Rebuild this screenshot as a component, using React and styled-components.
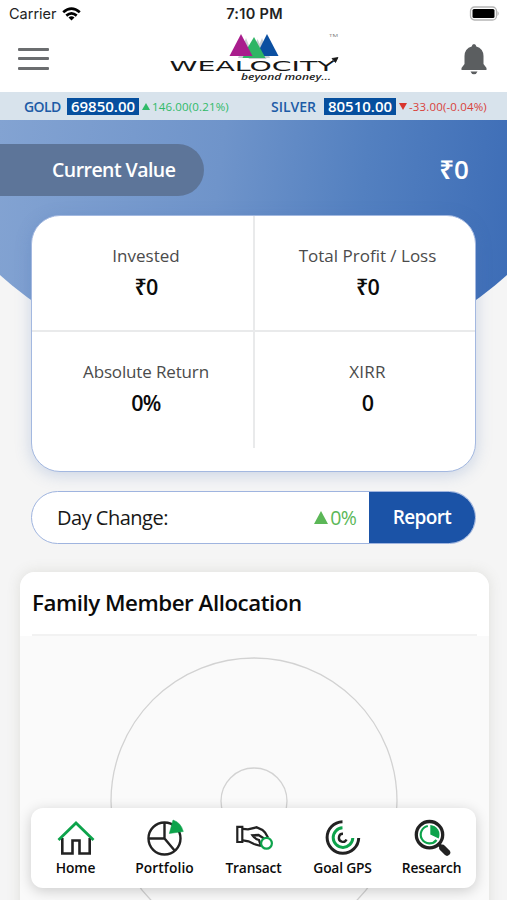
import React from 'react';
import styled, { createGlobalStyle } from 'styled-components';

const GlobalStyle = createGlobalStyle`
  * { box-sizing: border-box; }
  body {
    margin: 0;
    background: #f5f5f5;
    font-family: 'Open Sans', 'Noto Sans', sans-serif;
    color: #0b0b0b;
    overflow: hidden;
  }
`;

const Screen = styled.div`
  display: flex;
  flex-direction: column;
  width: 507px;
  height: 900px;
  overflow: hidden;
`;

const StatusBar = styled.div`
  display: grid;
  grid-template-columns: 1fr auto 1fr;
  align-items: center;
  flex: none;
  height: 27px;
  padding: 0 7px 0 9px;
  background: #fff;
  font-family: Inter, sans-serif;
  font-size: 14.5px;
  color: #222;
`;

const Carrier = styled.div`
  display: flex;
  align-items: center;
  gap: 5px;
`;

const Clock = styled.div`
  font-weight: 600;
  letter-spacing: 0.3px;
`;

const BatteryIcon = styled.svg`
  justify-self: end;
`;

const Header = styled.header`
  display: flex;
  justify-content: space-between;
  flex: none;
  height: 65px;
  padding: 1px 20px 0 18px;
  background: #fff;
`;

const MenuButton = styled.button`
  display: flex;
  flex-direction: column;
  gap: 6.4px;
  width: 31px;
  padding: 20px 0 0;
  border: 0;
  background: none;
`;

const MenuLine = styled.span`
  height: 3px;
  border-radius: 1px;
  background: #6b6d6f;
`;

const LogoSvg = styled.svg`
  margin: 3px 3px 0 0;
`;

const BellIcon = styled.svg`
  margin-top: 15px;
`;

const Ticker = styled.div`
  display: flex;
  align-items: center;
  flex: none;
  height: 28px;
  padding: 0 17px 0 24px;
  justify-content: space-between;
  background: #d8e3ec;
`;

const Quote = styled.div`
  display: flex;
  align-items: center;
`;

const Metal = styled.span`
  width: ${props => props.$width}px;
  font-size: 14px;
  font-weight: 600;
  color: #1c5ba6;
  letter-spacing: ${props => props.$spacing}px;
`;

const Price = styled.span`
  width: 72px;
  height: 17px;
  margin-right: 3px;
  background: #064f9e;
  color: #fff;
  font-size: 15px;
  font-weight: 600;
  line-height: 17px;
  text-align: center;
`;

const Move = styled.span`
  display: flex;
  align-items: center;
  gap: 2px;
  width: ${props => props.$width}px;
  font-size: 11.5px;
  font-weight: 500;
  white-space: nowrap;
  color: ${props => (props.$down ? '#d8413b' : '#2fba68')};
  letter-spacing: 0.15px;
`;

const Triangle = styled.span`
  flex: none;
  width: 0;
  height: 0;
  border-left: ${props => props.$size / 2}px solid transparent;
  border-right: ${props => props.$size / 2}px solid transparent;
  ${props => (props.$down ? 'border-top' : 'border-bottom')}: ${props => props.$size * 0.87}px solid ${props => props.color};
`;

const Hero = styled.section`
  position: relative;
  flex: none;
  padding: 24px 31px 0;

  &::before {
    content: '';
    position: absolute;
    z-index: -1;
    top: 0;
    left: 0;
    width: 100%;
    height: 252px;
    background: linear-gradient(97deg, #83a3d2 0%, #6f94ca 42%, #5380c0 69%, #3c6cb6 100%);
    clip-path: circle(380px at 50% -128px);
  }
`;

const CurrentValue = styled.div`
  display: flex;
  align-items: center;
  justify-content: space-between;
  height: 52px;
  margin: 0 7px 19px -31px;
  color: #fff;
`;

const CurrentLabel = styled.div`
  width: 204px;
  height: 52px;
  padding-left: 52px;
  border-radius: 0 26px 26px 0;
  background: #5d7599;
  font-size: 19.5px;
  font-weight: 600;
  line-height: 51px;
  letter-spacing: -0.55px;
`;

const CurrentAmount = styled.div`
  padding-bottom: 2px;
  font-size: 26px;
  font-weight: 600;
`;

const Summary = styled.div`
  display: grid;
  grid-template-columns: 223px 1fr;
  grid-template-rows: 116px 116px;
  height: 257px;
  border: 1px solid #a3b8e0;
  border-radius: 29px;
  background: #fff;
  box-shadow: 0 3px 16px rgba(70, 110, 180, 0.25);
`;

const Cell = styled.div`
  display: flex;
  flex-direction: column;
  align-items: center;
  padding: 28px 0 0 ${props => (props.$right ? 7 : 5)}px;
  border-right: ${props => (props.$right ? '2px solid #e9eaeb' : '0')};
  border-bottom: ${props => (props.$bottom ? '2px solid #e9eaeb' : '0')};
`;

const CellLabel = styled.div`
  font-size: 17px;
  line-height: 24px;
  color: #4b4b4b;
  letter-spacing: ${props => props.$spacing || 0}px;
`;

const CellValue = styled.div`
  margin-top: 4px;
  font-size: 21.5px;
  line-height: 30px;
  font-weight: 600;
  letter-spacing: -0.8px;
`;

const DayChange = styled.div`
  display: flex;
  align-items: center;
  height: 53px;
  margin-top: 19px;
  border: 1px solid #9fb4df;
  border-radius: 27px;
  background: #fff;
  overflow: hidden;
`;

const DayLabel = styled.div`
  flex: 1;
  padding: 0 0 1px 25px;
  font-size: 20px;
  color: #171717;
  letter-spacing: -0.5px;
`;

const DayValue = styled.div`
  display: flex;
  align-items: center;
  gap: 2px;
  padding: 0 13px 1px 0;
  font-size: 19.5px;
  font-weight: 500;
  color: #5bb757;
  letter-spacing: -0.8px;
`;

const ReportButton = styled.button`
  align-self: stretch;
  width: 106px;
  padding: 0 0 2px;
  border: 0;
  background: #1b53a7;
  color: #fff;
  font: 600 19px 'Open Sans', sans-serif;
  letter-spacing: -0.65px;
`;

const Allocation = styled.section`
  flex: none;
  width: 469px;
  height: 420px;
  margin: 28px 0 0 20px;
  border-radius: 15px;
  background: #fafafa;
  box-shadow: 0 0 14px rgba(110, 110, 90, 0.16);
  overflow: hidden;
`;

const AllocationTitle = styled.h2`
  height: 64px;
  margin: 0;
  padding: 0 12px;
  background: #fff;
  font-size: 22.3px;
  font-weight: 600;
  line-height: 62px;
  letter-spacing: -0.46px;

  &::after {
    content: '';
    display: block;
    height: 2px;
    background: #f2f2f2;
  }
`;

const AllocationChart = styled.svg`
  display: block;
`;

const TabBar = styled.nav`
  position: absolute;
  top: 808px;
  left: 31px;
  display: grid;
  grid-template-columns: repeat(5, 89px);
  width: 445px;
  height: 80px;
  border-radius: 12px;
  background: #fff;
  box-shadow: 0 3px 14px rgba(0, 0, 0, 0.19);
`;

const Tab = styled.div`
  display: flex;
  flex-direction: column;
  align-items: center;
  padding-top: 10px;
  font-size: 13.8px;
  font-weight: 600;
  line-height: 18px;
  letter-spacing: ${props => props.$spacing || 0}px;
`;

const TabIcon = styled.svg`
  flex: none;
  width: 40px;
  height: 40px;
  margin-bottom: 1px;
  fill: none;
`;

const GREEN = '#0da34b';
const INK = '#222';

const Logo = () => (
  <LogoSvg width="172" height="58" viewBox="168 31 172 58">
    <path d="M246 38l8 20h-16zM257.500 39l9 20h-18zM262 38l8 20h-16z" fill="#c9ced3" />
    <path d="M267 34L278.500 56H256z" fill="#0b4fa1" />
    <path d="M254 37L265.500 58H242.500l5-10z" fill="#2fb565" />
    <path d="M241 34L252.500 56H229.500z" fill="#a91d8d" />
    <text x="169.500" y="70.500" fontFamily="'DejaVu Sans', sans-serif" fontSize="14.500" fill="#161616" textLength="165" lengthAdjust="spacingAndGlyphs">WEALOCITY</text>
    <path d="M331 62l4-3.500M332 58.500l6-1-2.500 5z" fill="#161616" stroke="#161616" strokeWidth="0.800" />
    <text x="241" y="79.800" fontFamily="'Open Sans', sans-serif" fontSize="8.800" fontStyle="italic" fontWeight="600" fill="#222" textLength="90" lengthAdjust="spacingAndGlyphs">beyond money...</text>
    <text x="329" y="37" fontFamily="'Open Sans', sans-serif" fontSize="4" fill="#777" textLength="9" lengthAdjust="spacingAndGlyphs">TM</text>
  </LogoSvg>
);

const HomeIcon = () => (
  <TabIcon viewBox="0 0 40 40">
    <path d="M6.300 20V35.500H16.500V22.500H23.500V35.500H33.700V20" stroke={INK} strokeWidth="2.600" />
    <path d="M2.500 22L20 5L37.500 22" stroke={GREEN} strokeWidth="2.800" />
  </TabIcon>
);

const PortfolioIcon = () => (
  <TabIcon viewBox="0 0 40 40">
    <circle cx="19.500" cy="20.500" r="16" stroke={INK} strokeWidth="2.400" />
    <path d="M19.500 4.500V20.500M3.500 20.500H19.500L30 33" stroke={INK} strokeWidth="2.400" />
    <path d="M24.300 15.500L28 2Q36 4.500 38.300 13.500Z" fill={GREEN} stroke={GREEN} strokeWidth="0.500" />
  </TabIcon>
);

const TransactIcon = () => (
  <TabIcon viewBox="0 0 40 40">
    <path d="M3.300 8.800H8.300V24H3.300Z" stroke={INK} strokeWidth="2.200" />
    <path d="M8.800 10.800L14 11.300L22.800 9.300Q28 11 31 14.500L34 19.500M8.800 22.300L14.500 23.300L20 26L27 28" stroke={INK} strokeWidth="2.300" />
    <path d="M30 20.500L24.500 17L18.500 17.300Q21 21 25 22L26.500 27" stroke={INK} strokeWidth="2.300" />
    <circle cx="32.500" cy="25.300" r="5.400" fill="#fff" stroke={GREEN} strokeWidth="2.200" />
  </TabIcon>
);

const GoalIcon = () => (
  <TabIcon viewBox="0 0 40 40">
    <path d="M19.500 3.700A15.800 15.800 0 1 0 35.700 20" stroke={INK} strokeWidth="3" />
    <path d="M19.500 9.800A9.800 9.800 0 1 0 29.800 20" stroke={GREEN} strokeWidth="3" />
    <path d="M20 15.800A4 4 0 1 0 23.500 21.500" stroke={INK} strokeWidth="2.400" />
  </TabIcon>
);

const ResearchIcon = () => (
  <TabIcon viewBox="0 0 40 40">
    <circle cx="17.500" cy="16.700" r="13.200" stroke={INK} strokeWidth="3.300" />
    <path d="M26.500 26L29.500 29" stroke={INK} strokeWidth="3.500" />
    <path d="M30.500 30L35 34.500" stroke={INK} strokeWidth="6.500" strokeLinecap="round" />
    <path d="M15.800 8A8.800 8.800 0 1 0 24.500 22" stroke={GREEN} strokeWidth="2.200" />
    <path d="M18.300 16.500V7A9.700 9.700 0 0 1 26.700 20.500Z" fill={GREEN} />
  </TabIcon>
);

const stats = [
  { label: 'Invested', value: '₹0', spacing: 0 },
  { label: 'Total Profit / Loss', value: '₹0', spacing: 0 },
  { label: 'Absolute Return', value: '0%', spacing: -0.15 },
  { label: 'XIRR', value: '0', spacing: 0.2 },
];

const tabs = [
  { label: 'Home', Icon: HomeIcon, spacing: -0.1 },
  { label: 'Portfolio', Icon: PortfolioIcon, spacing: 0.1 },
  { label: 'Transact', Icon: TransactIcon, spacing: -0.2 },
  { label: 'Goal GPS', Icon: GoalIcon, spacing: -0.2 },
  { label: 'Research', Icon: ResearchIcon, spacing: -0.2 },
];

const App = () => (
  <Screen>
    <GlobalStyle />
    <StatusBar>
      <Carrier>
        Carrier
        <svg width="19" height="14" viewBox="0 0 19 14" fill="none" stroke="#000" strokeWidth="2.700">
          <path d="M1.200 5.200Q9.500-2 17.800 5.200M4.300 8.600Q9.500 4.200 14.700 8.600" />
          <path d="M9.500 13.500L6.500 10.500Q9.500 8 12.500 10.500Z" fill="#000" stroke="none" />
        </svg>
      </Carrier>
      <Clock>7:10 PM</Clock>
      <BatteryIcon width="31" height="15" viewBox="0 0 31 15">
        <rect x="1.500" y="1" width="26" height="13" rx="4" fill="#fff" stroke="#b5b5b5" strokeWidth="1.300" />
        <rect x="3.500" y="3" width="22" height="9" rx="1.500" fill="#000" />
        <path d="M28.500 5Q31 7.500 28.500 10Z" fill="#b5b5b5" />
      </BatteryIcon>
    </StatusBar>

    <Header>
      <MenuButton aria-label="Menu">
        <MenuLine />
        <MenuLine />
        <MenuLine />
      </MenuButton>
      <Logo />
      <BellIcon width="26" height="32" viewBox="0 0 26 32" fill="#5b5e60">
        <path d="M13 1Q15 1 15.300 3.500Q22.300 5.500 22.500 13V21L25.500 25V27H.5V25L3.500 21V13Q3.700 5.500 10.700 3.500Q11 1 13 1ZM9.500 28.500H16.500Q15.500 31.300 13 31.300T9.500 28.500Z" />
      </BellIcon>
    </Header>

    <Ticker>
      <Quote>
        <Metal $width={43} $spacing={-0.6}>GOLD</Metal>
        <Price>69850.00</Price>
        <Move $width={90}><Triangle $size={9} color="#2fba68" />146.00(0.21%)</Move>
      </Quote>
      <Quote>
        <Metal $width={53} $spacing={0}>SILVER</Metal>
        <Price>80510.00</Price>
        <Move $down $width={91}><Triangle $size={9} $down color="#d8352d" />-33.00(-0.04%)</Move>
      </Quote>
    </Ticker>

    <Hero>
      <CurrentValue>
        <CurrentLabel>Current Value</CurrentLabel>
        <CurrentAmount>₹0</CurrentAmount>
      </CurrentValue>
      <Summary>
        {stats.map((stat, index) => (
          <Cell key={stat.label} $right={index % 2 === 0} $bottom={index < 2}>
            <CellLabel $spacing={stat.spacing}>{stat.label}</CellLabel>
            <CellValue>{stat.value}</CellValue>
          </Cell>
        ))}
      </Summary>
      <DayChange>
        <DayLabel>Day Change:</DayLabel>
        <DayValue><Triangle $size={15} color="#5bb757" />0%</DayValue>
        <ReportButton>Report</ReportButton>
      </DayChange>
    </Hero>

    <Allocation>
      <AllocationTitle>Family Member Allocation</AllocationTitle>
      <AllocationChart width="469" height="356" fill="none" stroke="#d2d2d2" strokeWidth="1.300">
        <circle cx="234" cy="165" r="143" />
        <circle cx="234" cy="165" r="33" />
      </AllocationChart>
    </Allocation>

    <TabBar>
      {tabs.map(({ label, Icon, spacing }) => (
        <Tab key={label} $spacing={spacing}>
          <Icon />
          {label}
        </Tab>
      ))}
    </TabBar>
  </Screen>
);

export default App;
